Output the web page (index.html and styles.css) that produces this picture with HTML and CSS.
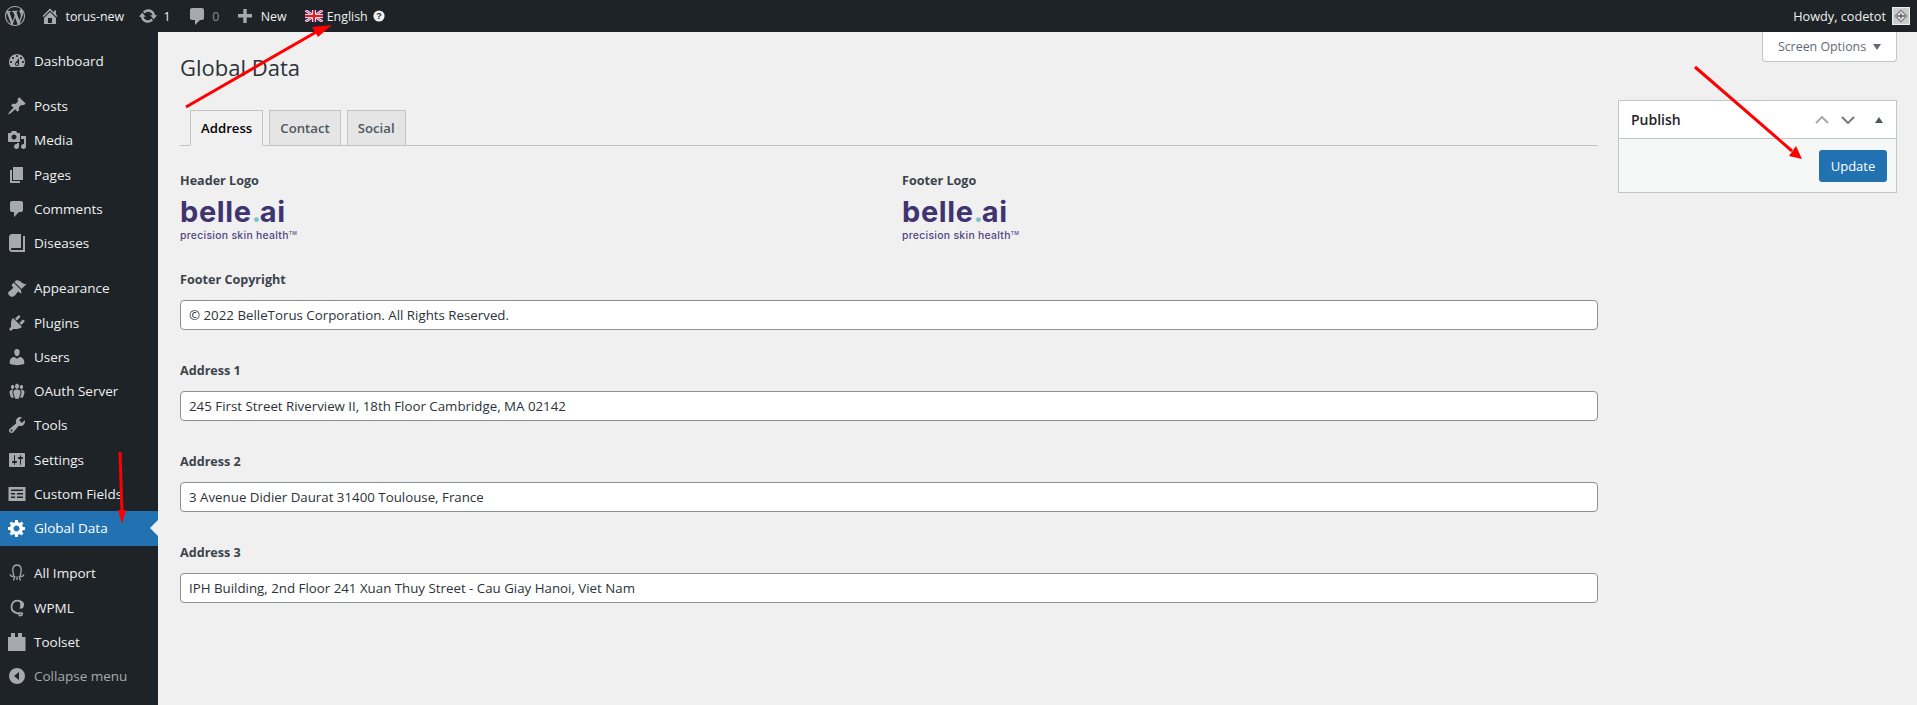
FILE: index.html
```html
<!DOCTYPE html>
<html lang="en">
<head>
<meta charset="utf-8">
<title>Global Data</title>
<link rel="stylesheet" href="styles.css">
</head>
<body>
<header class="adminbar">
  <div class="bar-left">
    <svg class="wp" viewBox="0 0 20 20"><path d="M20 10c0-5.51-4.49-10-10-10C4.48 0 0 4.49 0 10c0 5.52 4.48 10 10 10 5.51 0 10-4.48 10-10zM7.78 15.37L4.37 6.22c.55-.02 1.17-.08 1.17-.08.5-.06.44-1.13-.06-1.11 0 0-1.45.11-2.37.11-.18 0-.37 0-.58-.01C4.12 2.69 6.87 1.11 10 1.11c2.33 0 4.45.87 6.05 2.34-.68-.11-1.65.39-1.65 1.58 0 .74.45 1.36.9 2.1.35.61.55 1.36.55 2.46 0 1.49-1.4 5-1.4 5l-3.03-8.37c.54-.02.82-.17.82-.17.5-.05.44-1.25-.06-1.22 0 0-1.44.12-2.38.12-.87 0-2.33-.12-2.33-.12-.5-.03-.56 1.2-.06 1.22l.92.08 1.26 3.41zM17.41 10c.24-.64.74-1.87.43-4.25.7 1.29 1.05 2.71 1.05 4.25 0 3.29-1.73 6.24-4.4 7.78.97-2.59 1.94-5.2 2.92-7.78zM6.1 18.09C3.12 16.65 1.11 13.53 1.11 10c0-1.3.23-2.48.72-3.59C3.25 10.3 4.67 14.2 6.1 18.09zm4.03-6.63l2.58 6.98c-.86.29-1.76.45-2.71.45-.79 0-1.57-.11-2.29-.33.81-2.38 1.62-4.74 2.42-7.1z"/></svg>
    <span class="bar-item site"><svg class="bar-icon" viewBox="0 0 20 20"><path d="M16 8.5l1.53 1.53-1.06 1.06L10 4.62l-6.47 6.47-1.06-1.06L10 2.5l4 4v-2h2v4zm-6-2.46l6 5.99V18H4v-5.97zM12 17v-5H8v5h4z"/></svg>torus-new</span>
    <span class="bar-item"><svg class="bar-icon" viewBox="0 0 20 20"><path d="M10.2 3.28c3.53 0 6.43 2.61 6.92 6h2.08l-3.5 4-3.5-4h2.32c-.45-1.97-2.21-3.44-4.32-3.44-1.45 0-2.73.71-3.54 1.78L4.95 5.66C6.23 4.2 8.11 3.28 10.2 3.28zm-.4 13.44c-3.52 0-6.43-2.61-6.92-6H.8l3.5-4c1.17 1.33 2.33 2.67 3.5 4H5.48c.45 1.97 2.21 3.44 4.32 3.44 1.45 0 2.73-.71 3.54-1.78l1.71 1.95c-1.28 1.46-3.15 2.39-5.25 2.39z"/></svg>1</span>
    <span class="bar-item"><svg class="bar-icon" viewBox="0 0 20 20"><path d="M5 2h10c1.1 0 2 .9 2 2v8c0 1.1-.9 2-2 2h-2l-5 5v-5H5c-1.1 0-2-.9-2-2V4c0-1.1.9-2 2-2z"/></svg><span class="muted">0</span></span>
    <span class="bar-item"><svg class="bar-icon" viewBox="0 0 20 20"><path d="M17 8v3.4h-5.300V17H8.300v-5.600H3V8h5.300V3h3.400v5z"/></svg>New</span>
    <span class="bar-item lang">
      <svg class="flag" viewBox="0 0 18 12"><rect width="18" height="12" fill="#2b2f6b"/><path d="M0 0l18 12M18 0L0 12" stroke="#fff" stroke-width="2.4"/><path d="M0 0l18 12M18 0L0 12" stroke="#d8202f" stroke-width=".9"/><path d="M9 0v12M0 6h18" stroke="#fff" stroke-width="4"/><path d="M9 0v12M0 6h18" stroke="#d8202f" stroke-width="2.4"/></svg>English
      <svg class="help" viewBox="0 0 12 12"><circle cx="6" cy="6" r="5.6" fill="#f0f0f1"/><text x="6" y="9.2" class="help-q">?</text></svg>
    </span>
  </div>
  <div class="bar-right">Howdy, codetot
    <svg class="avatar" viewBox="0 0 16 16"><rect width="16" height="16" fill="#c9caca"/><rect x=".5" y=".5" width="15" height="15" fill="none" stroke="#eee"/><path d="M3 8l5-5 5 5-5 5z" fill="#f2f2f2" stroke="#777"/><path d="M4.5 8h7M8 5.5v5" stroke="#555" stroke-width="1.2"/></svg>
  </div>
</header>

<div class="page">
  <nav class="sidebar">
    <ul class="menu">
      <li class="item"><svg class="ico" viewBox="0 0 20 20"><path d="M3.76 16h12.48c1.1-1.37 1.76-3.11 1.76-5 0-4.42-3.58-8-8-8s-8 3.58-8 8c0 1.89.66 3.63 1.76 5zM10 4c.55 0 1 .45 1 1s-.45 1-1 1-1-.45-1-1 .45-1 1-1zM6 6c.55 0 1 .45 1 1s-.45 1-1 1-1-.45-1-1 .45-1 1-1zm8 0c.55 0 1 .45 1 1s-.45 1-1 1-1-.45-1-1 .45-1 1-1zm-5.37 5.55L12 7v6c0 1.1-.9 2-2 2s-2-.9-2-2c0-.57.24-1.08.63-1.45zM4 10c.55 0 1 .45 1 1s-.45 1-1 1-1-.45-1-1 .45-1 1-1zm12 0c.55 0 1 .45 1 1s-.45 1-1 1-1-.45-1-1 .45-1 1-1zm-5 3c0-.55-.45-1-1-1s-1 .45-1 1 .45 1 1 1 1-.45 1-1z"/></svg>Dashboard</li>
      <li class="item sep"><svg class="ico" viewBox="0 0 20 20"><path d="M10.44 3.02l1.82-1.82 6.36 6.35-1.83 1.82c-1.05-.68-2.48-.57-3.41.36l-.75.75c-.92.93-1.04 2.35-.35 3.41l-1.83 1.82-2.41-2.41-2.8 2.79c-.42.42-3.38 2.71-3.8 2.29s1.86-3.39 2.28-3.81l2.79-2.79L4.1 9.36l1.83-1.82c1.05.69 2.48.57 3.4-.36l.75-.75c.93-.92 1.05-2.35.36-3.41z"/></svg>Posts</li>
      <li class="item"><svg class="ico" viewBox="0 0 20 20"><path d="M13 11V4c0-.55-.45-1-1-1h-1.67L9 1H5L3.67 3H2c-.55 0-1 .45-1 1v7c0 .55.45 1 1 1h10c.55 0 1-.45 1-1zM7 4.5c1.38 0 2.5 1.12 2.5 2.5S8.38 9.5 7 9.5 4.5 8.38 4.5 7 5.62 4.5 7 4.5zM14 6h5v10.5c0 1.38-1.12 2.5-2.5 2.5S14 17.88 14 16.5s1.12-2.5 2.5-2.5c.17 0 .34.02.5.05V9h-3V6zm-4 8.05V13h2v3.5c0 1.38-1.12 2.5-2.5 2.5S7 17.88 7 16.5 8.12 14 9.5 14c.17 0 .34.02.5.05z"/></svg>Media</li>
      <li class="item"><svg class="ico" viewBox="0 0 20 20"><path d="M6 15V2h10v13H6zm-1 1h8v2H3V5h2v11z"/></svg>Pages</li>
      <li class="item"><svg class="ico" viewBox="0 0 20 20"><path d="M5 2h9c1.1 0 2 .9 2 2v7c0 1.1-.9 2-2 2h-2l-5 5v-5H5c-1.1 0-2-.9-2-2V4c0-1.1.9-2 2-2z"/></svg>Comments</li>
      <li class="item"><svg class="ico" viewBox="0 0 20 20"><path d="M16 3h2v16H5c-1.66 0-3-1.34-3-3V4c0-1.66 1.34-3 3-3h9v14H5c-.55 0-1 .45-1 1s.45 1 1 1h11V3z"/></svg>Diseases</li>
      <li class="item sep"><svg class="ico" viewBox="0 0 20 20"><path d="M14.48 11.06L7.41 3.99l1.5-1.5c.5-.56 2.3-.47 3.51.32 1.21.8 1.43 1.28 2.91 2.1 1.18.64 2.45 1.26 4.45.85zm-.71.71L6.7 4.7 4.93 6.47c-.39.39-.39 1.02 0 1.41l1.06 1.06c.39.39.39 1.03 0 1.42-.6.6-1.43 1.11-2.21 1.69-.35.26-.7.53-1.01.84C1.43 13.23.18 15.35 2.4 17.6s4.37 1.02 5.71-.36c.31-.31.59-.66.85-1.01.58-.78 1.09-1.61 1.69-2.21.39-.39 1.02-.39 1.41 0l1.06 1.06c.39.39 1.02.39 1.41 0z"/></svg>Appearance</li>
      <li class="item"><svg class="ico" viewBox="0 0 20 20"><path d="M13.11 4.36L9.87 7.6 8 5.73l3.24-3.24c.35-.34 1.05-.2 1.56.32.52.51.66 1.21.31 1.55zm-8 1.77l.91-1.12 9.01 9.01-1.19.84c-.71.71-2.63 1.16-3.82 1.16H6.14L4.9 17.26c-.59.59-1.54.59-2.12 0-.59-.58-.59-1.53 0-2.12l1.24-1.24v-3.88c0-1.13.4-3.19 1.09-3.89zm7.26 3.97l3.24-3.24c.34-.35 1.04-.21 1.55.31.52.51.66 1.21.31 1.55l-3.24 3.25z"/></svg>Plugins</li>
      <li class="item"><svg class="ico" viewBox="0 0 20 20"><path d="M10 9.25c-2.27 0-2.73-3.44-2.73-3.44C7 4.02 7.82 2 9.97 2c2.16 0 2.98 2.02 2.71 3.81 0 0-.41 3.44-2.68 3.44zm0 2.57L12.72 10c2.39 0 4.52 2.33 4.52 4.53v2.49s-3.65 1.13-7.24 1.13c-3.65 0-7.24-1.13-7.24-1.13v-2.49c0-2.25 1.94-4.48 4.47-4.48z"/></svg>Users</li>
      <li class="item"><svg class="ico" viewBox="0 0 20 20"><path d="M8.03 4.46c-.29 1.28.55 3.46 1.97 3.46 1.41 0 2.25-2.18 1.96-3.46-.22-.98-1.08-1.63-1.96-1.63-.89 0-1.74.65-1.97 1.63zm-4.13.9c-.25 1.08.47 2.93 1.67 2.93s1.92-1.85 1.67-2.93c-.19-.83-.92-1.39-1.67-1.39s-1.48.56-1.67 1.39zm8.86 0c-.25 1.08.47 2.93 1.66 2.93 1.2 0 1.92-1.85 1.67-2.93-.19-.83-.92-1.39-1.67-1.39-.74 0-1.47.56-1.66 1.39zm-.59 11.43l1.25-4.3C14.2 10 12.71 8.47 10 8.47c-2.72 0-4.21 1.53-3.44 4.02l1.26 4.3C8.05 17.51 9 18 10 18c.98 0 1.94-.49 2.17-1.21zm-6.1-7.63c-.49.67-.96 1.83-.42 3.59l1.12 3.79c-.34.2-.77.31-1.2.31-.85 0-1.65-.41-1.85-1.03l-1.07-3.65c-.65-2.11.61-3.4 2.92-3.4.27 0 .54.02.79.06-.1.1-.2.22-.29.33zm8.35-.39c2.31 0 3.58 1.29 2.92 3.4l-1.07 3.65c-.2.62-1 1.03-1.85 1.03-.43 0-.86-.11-1.2-.31l1.11-3.77c.55-1.78.08-2.94-.42-3.61-.08-.11-.18-.23-.28-.33.25-.04.51-.06.79-.06z"/></svg>OAuth Server</li>
      <li class="item"><svg class="ico" viewBox="0 0 20 20"><path d="M16.68 9.77c-1.34 1.34-3.3 1.67-4.95.99l-5.41 6.52c-.99.99-2.59.99-3.58 0s-.99-2.59 0-3.57l6.52-5.42c-.68-1.65-.35-3.61.99-4.95 1.28-1.28 3.12-1.62 4.72-1.06l-2.89 2.89 2.82 2.82 2.86-2.87c.53 1.58.18 3.39-1.08 4.65zM3.81 16.21c.4.39 1.04.39 1.43 0 .4-.4.4-1.04 0-1.43-.39-.4-1.03-.4-1.43 0-.39.39-.39 1.03 0 1.43z"/></svg>Tools</li>
      <li class="item"><svg class="ico" viewBox="0 0 20 20"><path d="M18 16V4c0-.55-.45-1-1-1H3c-.55 0-1 .45-1 1v12c0 .55.45 1 1 1h14c.55 0 1-.45 1-1zM8 11h1c.55 0 1 .45 1 1s-.45 1-1 1H8v1.5c0 .28-.22.5-.5.5s-.5-.22-.5-.5V13H6c-.55 0-1-.45-1-1s.45-1 1-1h1V5.5c0-.28.22-.5.5-.5s.5.22.5.5V11zm5-2h-1c-.55 0-1-.45-1-1s.45-1 1-1h1V5.5c0-.28.22-.5.5-.5s.5.22.5.5V7h1c.55 0 1 .45 1 1s-.45 1-1 1h-1v5.5c0 .28-.22.5-.5.5s-.5-.22-.5-.5V9z"/></svg>Settings</li>
      <li class="item"><svg class="ico" viewBox="0 0 20 20"><path fill-rule="evenodd" d="M1.500 3h17v14h-17zM4 5.500V7h12V5.500zM4 9v1.500h4V9zm6 0v1.500h6V9zm-6 3.500V14h4v-1.500zm6 0V14h6v-1.500z"/></svg>Custom Fields</li>
      <li class="item active"><svg class="ico" viewBox="0 0 20 20"><path d="M18 12h-2.18c-.17.7-.44 1.35-.81 1.93l1.54 1.54-2.1 2.1-1.54-1.54c-.58.36-1.23.63-1.91.79V19H8v-2.18c-.68-.16-1.33-.43-1.91-.79l-1.54 1.54-2.12-2.12 1.54-1.54c-.36-.58-.63-1.23-.79-1.91H1V9.03h2.17c.16-.7.44-1.35.8-1.94L2.43 5.55l2.1-2.1 1.54 1.54c.58-.37 1.24-.64 1.93-.81V2h3v2.18c.68.16 1.33.43 1.91.79l1.54-1.54 2.12 2.12-1.54 1.54c.36.59.64 1.24.8 1.94H18V12zm-8.5 1.500c1.66 0 3-1.340 3-3s-1.340-3-3-3-3 1.340-3 3 1.340 3 3 3z"/></svg>Global Data</li>
      <li class="item sep"><svg class="ico" viewBox="0 0 20 20"><path class="line" d="M6 9.500C4.800 4.500 7 2 10 2s5.200 2.500 4 7.500c-.4 1.500-1 2.500-.5 3.500s2.500.5 3.500-1.500M6 9.500c.4 1.500 1 2.500.5 3.500s-2.500.5-3.500-1.500M8 13l-1.500 4.500M12 13l1.500 4.500M10 13.500V17"/></svg>All Import</li>
      <li class="item"><svg class="ico" viewBox="0 0 20 20"><path class="line thick" d="M15 4.500C12.500 2 8 2 6 4.500s-2 6.500 0 8.500 5.500 3 8 1.500M14.500 14.500c1 .5 1 2.500-.5 3s-2.500-1-1.500-2"/><path d="M12.500 3.500c3-1 5 1 4.500 4s-2.500 3.500-4.500 3c1-2 1-4.500 0-7z"/></svg>WPML</li>
      <li class="item"><svg class="ico" viewBox="0 0 20 20"><path d="M1 19V5h3V1h4v4h3V1h4v4h3.500v14z"/></svg>Toolset</li>
      <li class="item collapse"><svg class="ico" viewBox="0 0 20 20"><path fill-rule="evenodd" d="M10 2a8 8 0 1 1 0 16 8 8 0 0 1 0-16zm2 4l-5 4 5 4z"/></svg>Collapse menu</li>
    </ul>
  </nav>

  <main class="main">
    <div class="screen-options">Screen Options <span class="caret"></span></div>
    <h1 class="title">Global Data</h1>
    <div class="columns">
      <section class="form">
        <div class="tabs">
          <span class="tab current">Address</span>
          <span class="tab">Contact</span>
          <span class="tab">Social</span>
        </div>
        <div class="logos">
          <div>
            <div class="label">Header Logo</div>
            <div class="logo"><div class="logo-main">belle<span class="dot">.</span>ai</div><div class="logo-sub">precision skin health<sup class="tm">TM</sup></div></div>
          </div>
          <div>
            <div class="label">Footer Logo</div>
            <div class="logo"><div class="logo-main">belle<span class="dot">.</span>ai</div><div class="logo-sub">precision skin health<sup class="tm">TM</sup></div></div>
          </div>
        </div>
        <div class="field first">
          <div class="label">Footer Copyright</div>
          <div class="input">© 2022 BelleTorus Corporation. All Rights Reserved.</div>
        </div>
        <div class="field">
          <div class="label">Address 1</div>
          <div class="input">245 First Street Riverview II, 18th Floor Cambridge, MA 02142</div>
        </div>
        <div class="field">
          <div class="label">Address 2</div>
          <div class="input">3 Avenue Didier Daurat 31400 Toulouse, France</div>
        </div>
        <div class="field">
          <div class="label">Address 3</div>
          <div class="input">IPH Building, 2nd Floor 241 Xuan Thuy Street - Cau Giay Hanoi, Viet Nam</div>
        </div>
      </section>
      <aside class="side">
        <div class="box">
          <div class="box-head">
            <span class="box-title">Publish</span>
            <span class="box-ctrl">
              <svg class="chev up" viewBox="0 0 14 8"><path d="M1 7l6-6 6 6" fill="none" stroke-width="2"/></svg>
              <svg class="chev" viewBox="0 0 14 8"><path d="M1 1l6 6 6-6" fill="none" stroke-width="2"/></svg>
              <span class="tri"></span>
            </span>
          </div>
          <div class="box-foot"><span class="btn">Update</span></div>
        </div>
      </aside>
    </div>
  </main>
</div>

<svg class="arrows" viewBox="0 0 1917 705">
  <g class="arrow">
    <path d="M186 107L318 31"/><polygon points="332,25 318,37 312,27"/>
    <path d="M120 452L122 512"/><polygon points="122,524 118,510 126,510"/>
    <path d="M1695 67L1792 151"/><polygon points="1802,159 1789,156 1796,146"/>
  </g>
</svg>
</body>
</html>
```

FILE: styles.css
```css
* { box-sizing: border-box; }
html, body { margin: 0; height: 705px; overflow: hidden; }
body {
  background: #f0f0f1;
  color: #3c434a;
  font-family: "Open Sans", "Noto Sans", "Liberation Sans", sans-serif;
  font-size: 13px;
  position: relative;
}
.adminbar {
  height: 32px;
  background: #1d2327;
  color: #f0f0f1;
  display: flex;
  justify-content: space-between;
  align-items: center;
  padding: 0 7px 0 5px;
  font-size: 12.4px;
}
.bar-right { font-size: 12.7px; }
.bar-left, .bar-right, .bar-item { display: flex; align-items: center; }
.wp { width: 20px; height: 20px; fill: #a7aaad; margin-right: 15px; }
.bar-item { margin-right: 16px; }
.site { margin-right: 14px; }
.bar-icon { width: 20px; height: 20px; fill: #a7aaad; margin-right: 5.5px; }
.muted { color: #8c8f94; }
.lang { margin-left: 2px; }
.flag { width: 18px; height: 12px; margin-right: 4px; }
.help { width: 12px; height: 12px; margin-left: 5px; }
.help-q { font: 700 9px "Liberation Sans", sans-serif; fill: #1d2327; text-anchor: middle; }
.avatar { width: 18px; height: 18px; margin-left: 6px; }

.page { display: flex; height: 673px; }
.sidebar { width: 158px; flex: none; background: #1d2327; padding-top: 12px; }
.menu { list-style: none; margin: 0; padding: 0; }
.item {
  height: 34.3px;
  display: flex;
  align-items: center;
  padding-left: 7px;
  color: #f0f0f1;
  font-size: 13.5px;
  position: relative;
}
.sep { margin-top: 10.7px; }
.ico { width: 20px; height: 20px; margin-right: 7px; fill: #a7aaad; flex: none; }
.line { fill: none; stroke: #a7aaad; stroke-width: 1.3; }
.thick { stroke-width: 1.8; }
.active { background: #2271b1; color: #fff; }
.active .ico { fill: #fff; }
.active::after {
  content: "";
  position: absolute;
  right: 0;
  top: 50%;
  margin-top: -8px;
  border: 8px solid transparent;
  border-right-color: #f0f0f1;
  border-left-width: 0;
}
.collapse { color: #a7aaad; }

.main { flex: 1; padding: 20px 20px 0 22px; min-width: 0; }
.screen-options {
  float: right;
  margin-top: -20px;
  height: 30px;
  width: 135px;
  background: #fff;
  border: 1px solid #c3c4c7;
  border-top: 0;
  border-radius: 0 0 4px 4px;
  color: #646970;
  display: flex;
  align-items: center;
  justify-content: center;
  gap: 7px;
  font-size: 12.4px;
}
.caret { border: 4px solid transparent; border-top: 6px solid #646970; border-bottom: 0; }
.title {
  margin: 0 0 18px;
  font-size: 22px;
  font-weight: 400;
  line-height: 30px;
  color: #2c3338;
}
.columns { display: flex; gap: 20px; clear: both; }
.form { flex: 1; min-width: 0; padding-top: 10px; }
.side { width: 279px; flex: none; }
.tabs {
  display: flex;
  gap: 6px;
  padding-left: 10px;
  border-bottom: 1px solid #c3c4c7;
  height: 36px;
}
.tab {
  height: 36px;
  padding: 0 10px;
  display: flex;
  align-items: center;
  background: #e5e5e5;
  border: 1px solid #c3c4c7;
  color: #50575e;
  font-weight: 600;
  font-size: 13.2px;
}
.current { background: #f0f0f1; color: #000; border-bottom-color: #f0f0f1; }
.label { font-weight: 700; color: #3c434a; line-height: 18px; font-size: 12.6px; }
.logos {
  display: grid;
  grid-template-columns: 1fr 1fr;
  gap: 26px;
  padding-top: 26px;
}
.logo { margin-top: 8px; height: 43px; color: #3f3470; }
.logo-main { font: 700 29px/28px "Inter", sans-serif; letter-spacing: .6px; }
.dot { color: #7ac5cd; letter-spacing: -1.5px; }
.logo-sub { font: 500 10.4px/12px "Inter", sans-serif; letter-spacing: .3px; color: #4f4680; margin-top: 4px; }
.tm { font-size: 5px; line-height: 0; vertical-align: 4px; }
.field { margin-top: 32px; }
.field.first { margin-top: 30px; }
.input {
  margin-top: 11px;
  height: 30px;
  background: #fff;
  border: 1px solid #8c8f94;
  border-radius: 4px;
  padding: 0 8px;
  line-height: 28px;
  color: #2c3338;
  font-size: 13.3px;
}
.box { border: 1px solid #c3c4c7; background: #fff; }
.box-head {
  height: 38px;
  border-bottom: 1px solid #c3c4c7;
  display: flex;
  align-items: center;
  justify-content: space-between;
  padding: 0 13px 0 12px;
}
.box-title { font-size: 14px; font-weight: 600; color: #1d2327; }
.box-ctrl { display: flex; align-items: center; gap: 12px; }
.chev { width: 14px; height: 8px; stroke: #787c82; }
.chev.up { stroke: #a7aaad; }
.tri { border: 4px solid transparent; border-bottom: 6px solid #50575e; border-top: 0; margin-left: 8px; }
.box-foot {
  height: 53px;
  background: #f6f7f7;
  display: flex;
  align-items: center;
  justify-content: flex-end;
  padding-right: 9px;
}
.btn {
  height: 32px;
  width: 68px;
  background: #2271b1;
  color: #fff;
  border-radius: 3px;
  display: flex;
  align-items: center;
  justify-content: center;
}
.arrows { position: absolute; left: 0; top: 0; width: 1917px; height: 705px; pointer-events: none; }
.arrow path { stroke: #f00; stroke-width: 3; fill: none; }
.arrow polygon { fill: #f00; }
```
